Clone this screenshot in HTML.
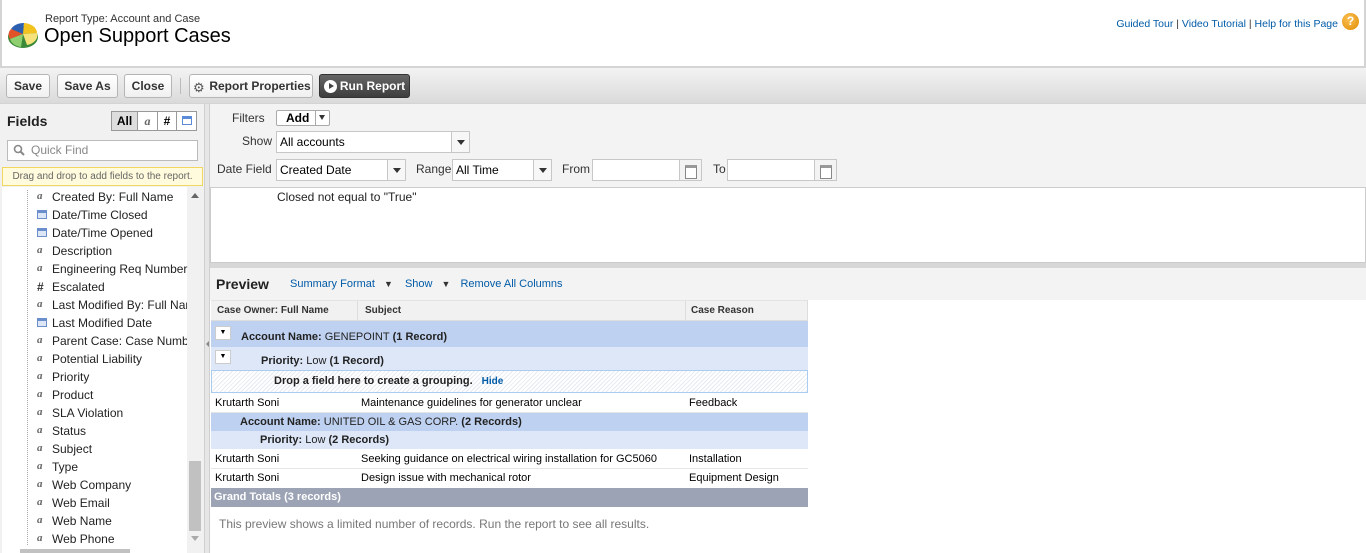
<!DOCTYPE html>
<html><head><style>
*{box-sizing:border-box;margin:0;padding:0}
body{width:1366px;height:553px;overflow:hidden;background:#d4d4d4;font-family:"Liberation Sans",Arial,sans-serif;font-size:12px;color:#000;position:relative}
.a{position:absolute}
.btn{position:absolute;top:74px;height:24px;border:1px solid #b5b5b5;border-radius:3px;background:linear-gradient(#fff,#f0f0f0);font-weight:bold;font-size:12px;color:#333;text-align:center;line-height:22px}
.inp{position:absolute;height:22px;border:1px solid #c7c7c7;background:#fff;font-size:12px;line-height:20px;padding-left:3px}
.dd{position:absolute;right:0;top:0;width:18px;height:20px;border-left:1px solid #c7c7c7;background:#f7f7f7}
.dd:after{content:"";position:absolute;left:5px;top:8px;border-left:4px solid transparent;border-right:4px solid transparent;border-top:5px solid #333}
.lbl{position:absolute;color:#333;font-size:12px}
.field{position:absolute;left:52px;font-size:12px;color:#222;height:18px;line-height:18px;white-space:nowrap}
.ic{position:absolute;left:37px;width:10px;font-size:11px;color:#666;font-style:italic;font-family:"Liberation Serif",serif;font-weight:bold}
.row{position:absolute;left:211px;width:597px;font-size:11px}
.cal{position:absolute;right:0;top:0;width:22px;height:20px;border-left:1px solid #c7c7c7;background:#f3f3f3}
.cal:after{content:"";position:absolute;left:5px;top:5px;width:10px;height:10px;border:1px solid #888;border-top:3px solid #999;background:#fff}
</style></head><body>
<div class="a" style="left:2px;top:0;width:1362px;height:66px;background:#fff"></div>
<svg class="a" style="left:7px;top:17px" width="32" height="34" viewBox="0 0 32 34">
<ellipse cx="16" cy="20" rx="15" ry="11" fill="#3a8a3a"/>
<path d="M16 17 L4 12 A14 10 0 0 1 17 6 Z" fill="#2d5fb0"/>
<path d="M16 17 L17 6 A14 10 0 0 1 30 16 Z" fill="#f2c21e"/>
<path d="M16 17 L30 16 A14 10 0 0 1 20 28 Z" fill="#f6e27a"/>
<path d="M16 17 L4 12 A14 10 0 0 0 3 22 Z" fill="#e2532a"/>
<path d="M16 17 L3 22 A14 10 0 0 0 14 30 Z" fill="#8fcf6f"/>
</svg>
<div class="a" style="left:45px;top:13px;font-size:11px;color:#333">Report Type: Account and Case</div>
<div class="a" style="left:44px;top:25px;font-size:20px;color:#000">Open Support Cases</div>
<div class="a" style="right:28px;top:18px;font-size:10.5px;color:#015ba7;white-space:nowrap">Guided Tour <span style="color:#333">|</span> Video Tutorial <span style="color:#333">|</span> Help for this Page</div>
<div class="a" style="left:1342px;top:13px;width:17px;height:17px;border-radius:50%;background:radial-gradient(circle at 40% 35%,#fbc155,#e08a00);color:#fff;font-weight:bold;font-size:12px;text-align:center;line-height:17px">?</div>
<div class="a" style="left:0;top:68px;width:1366px;height:35px;background:linear-gradient(#f3f3f3,#dadada)"></div>
<div class="btn" style="left:6px;width:44px">Save</div>
<div class="btn" style="left:57px;width:61px">Save As</div>
<div class="btn" style="left:124px;width:48px">Close</div>
<div class="a" style="left:180px;top:78px;width:1px;height:16px;background:#bbb"></div>
<div class="btn" style="left:189px;width:124px;padding-left:18px">Report Properties</div>
<div class="a" style="left:193px;top:80px;font-size:13px;color:#555">⚙</div>
<div class="btn" style="left:319px;width:91px;background:linear-gradient(#666,#3d3d3d);border-color:#333;color:#fff;padding-left:16px">Run Report</div>
<div class="a" style="left:324px;top:80px;width:13px;height:13px;border-radius:50%;background:#fff"></div>
<div class="a" style="left:329px;top:83px;border-top:3.5px solid transparent;border-bottom:3.5px solid transparent;border-left:5px solid #444"></div>
<div class="a" style="left:0;top:104px;width:204px;height:449px;background:#f1f1f1"></div>
<div class="a" style="left:7px;top:113px;font-size:14px;font-weight:bold;color:#222">Fields</div>
<div class="a" style="left:111px;top:111px;width:86px;height:20px;border:1px solid #999;background:#fff;display:flex">
<div style="width:26px;background:#ddd;font-weight:bold;text-align:center;line-height:18px;border-right:1px solid #999">All</div>
<div style="width:20px;text-align:center;line-height:18px;border-right:1px solid #999;font-style:italic;color:#666;font-family:'Liberation Serif',serif;font-weight:bold">a</div>
<div style="width:19px;text-align:center;line-height:18px;border-right:1px solid #999;font-weight:bold">#</div>
<div style="flex:1;position:relative"><div style="position:absolute;left:5px;top:4px;width:10px;height:9px;border:1px solid #5b8ad6;border-top:3px solid #5b8ad6"></div></div>
</div>
<div class="a" style="left:7px;top:140px;width:191px;height:21px;border:1px solid #bbb;background:#fff;color:#888;font-size:12px;line-height:19px;padding-left:23px">Quick Find</div>
<svg class="a" style="left:13px;top:144px" width="12" height="12"><circle cx="5" cy="5" r="3.5" stroke="#888" stroke-width="1.6" fill="none"/><line x1="7.5" y1="7.5" x2="11" y2="11" stroke="#888" stroke-width="2"/></svg>
<div class="a" style="left:2px;top:167px;width:201px;height:19px;background:#fffbdc;border:1px solid #f0d860;color:#666;font-size:10px;line-height:17px;text-align:center">Drag and drop to add fields to the report.</div>
<div class="a" style="left:2px;top:187px;width:185px;height:366px;background:#fff"></div>
<div class="a" style="left:27px;top:190px;height:355px;border-left:1px dotted #aaa"></div>
<div class="a" style="left:187px;top:187px;width:15px;height:366px;background:#f1f1f1"></div>
<div class="a" style="left:189px;top:461px;width:12px;height:70px;background:#c1c1c1"></div>
<div class="a" style="left:191px;top:193px;border-left:4px solid transparent;border-right:4px solid transparent;border-bottom:5px solid #666"></div>
<div class="a" style="left:191px;top:536px;border-left:4px solid transparent;border-right:4px solid transparent;border-top:5px solid #aaa"></div>
<div class="a" style="left:20px;top:549px;width:110px;height:4px;background:#c1c1c1"></div>
<div class="field" style="top:188px">Created By: Full Name</div>
<div class="field" style="top:206px">Date/Time Closed</div>
<div class="field" style="top:224px">Date/Time Opened</div>
<div class="field" style="top:242px">Description</div>
<div class="field" style="top:260px">Engineering Req Number</div>
<div class="field" style="top:278px">Escalated</div>
<div class="field" style="top:296px;width:135px;overflow:hidden">Last Modified By: Full Name</div>
<div class="field" style="top:314px">Last Modified Date</div>
<div class="field" style="top:332px;width:135px;overflow:hidden">Parent Case: Case Number</div>
<div class="field" style="top:350px">Potential Liability</div>
<div class="field" style="top:368px">Priority</div>
<div class="field" style="top:386px">Product</div>
<div class="field" style="top:404px">SLA Violation</div>
<div class="field" style="top:422px">Status</div>
<div class="field" style="top:440px">Subject</div>
<div class="field" style="top:458px">Type</div>
<div class="field" style="top:476px">Web Company</div>
<div class="field" style="top:494px">Web Email</div>
<div class="field" style="top:512px">Web Name</div>
<div class="field" style="top:530px">Web Phone</div>
<div class="ic" style="top:190px">a</div>
<div class="a" style="left:37px;top:210px;width:10px;height:9px;border:1px solid #6b8fcc;border-top:3px solid #6b8fcc;background:#dde6f5"></div>
<div class="a" style="left:37px;top:228px;width:10px;height:9px;border:1px solid #6b8fcc;border-top:3px solid #6b8fcc;background:#dde6f5"></div>
<div class="ic" style="top:244px">a</div>
<div class="ic" style="top:262px">a</div>
<div class="a" style="left:37px;top:280px;font-size:12px;font-weight:bold;color:#333">#</div>
<div class="ic" style="top:298px">a</div>
<div class="a" style="left:37px;top:318px;width:10px;height:9px;border:1px solid #6b8fcc;border-top:3px solid #6b8fcc;background:#dde6f5"></div>
<div class="ic" style="top:334px">a</div><div class="ic" style="top:352px">a</div><div class="ic" style="top:370px">a</div><div class="ic" style="top:388px">a</div><div class="ic" style="top:406px">a</div><div class="ic" style="top:424px">a</div><div class="ic" style="top:442px">a</div><div class="ic" style="top:460px">a</div><div class="ic" style="top:478px">a</div><div class="ic" style="top:496px">a</div><div class="ic" style="top:514px">a</div><div class="ic" style="top:532px">a</div>
<div class="a" style="left:210px;top:104px;width:1156px;height:84px;background:#f3f3f3"></div>
<div class="lbl" style="left:232px;top:111px;font-size:12px">Filters</div>
<div class="a" style="left:276px;top:110px;width:54px;height:16px;border:1px solid #aaa;border-radius:2px;background:#fff;font-weight:bold;font-size:12px;line-height:14px;padding-left:9px">Add<span style="position:absolute;left:38px;top:0;height:14px;border-left:1px solid #aaa;width:15px"></span><span style="position:absolute;left:42px;top:4px;border-left:3.5px solid transparent;border-right:3.5px solid transparent;border-top:5px solid #333"></span></div>
<div class="lbl" style="left:242px;top:134px">Show</div>
<div class="inp" style="left:276px;top:131px;width:194px">All accounts<div class="dd"></div></div>
<div class="lbl" style="left:217px;top:162px">Date Field</div>
<div class="inp" style="left:276px;top:159px;width:130px">Created Date<div class="dd"></div></div>
<div class="lbl" style="left:416px;top:162px">Range</div>
<div class="inp" style="left:452px;top:159px;width:100px">All Time<div class="dd"></div></div>
<div class="lbl" style="left:562px;top:162px">From</div>
<div class="inp" style="left:592px;top:159px;width:110px"><div class="cal"></div></div>
<div class="lbl" style="left:713px;top:162px">To</div>
<div class="inp" style="left:727px;top:159px;width:110px"><div class="cal"></div></div>
<div class="a" style="left:210px;top:187px;width:1156px;height:76px;background:#fff;border:1px solid #ccc"></div>
<div class="a" style="left:277px;top:190px;font-size:12px;color:#222">Closed not equal to "True"</div>
<div class="a" style="left:210px;top:263px;width:1156px;height:5px;background:#d7d7d7"></div>
<div class="a" style="left:210px;top:268px;width:1156px;height:285px;background:#fff"></div>
<div class="a" style="left:210px;top:268px;width:1156px;height:32px;background:#f3f3f3"></div>
<div class="a" style="left:216px;top:276px;font-size:14px;font-weight:bold;color:#222">Preview</div>
<div class="a" style="left:290px;top:278px;font-size:11px;color:#015ba7">Summary Format <span style="color:#333;font-size:9px;margin-left:6px">▼</span><span style="margin-left:12px">Show</span> <span style="color:#333;font-size:9px;margin-left:6px">▼</span><span style="margin-left:10px">Remove All Columns</span></div>
<div class="row" style="top:300px;height:21px;background:#f1f1f1;border-bottom:1px solid #ddd;border-top:1px solid #e3e3e3;font-weight:bold;color:#333;line-height:19px;font-size:10px">
<span class="a" style="left:6px">Case Owner: Full Name</span><span class="a" style="left:146px;top:0;height:19px;border-left:1px solid #ddd;padding-left:7px">Subject</span><span class="a" style="left:474px;top:0;height:19px;border-left:1px solid #ddd;padding-left:5px">Case Reason</span></div>
<div class="a" style="left:807px;top:300px;width:1px;height:21px;background:#ddd"></div>
<div class="row" style="top:321px;height:26px;background:#bfd1f0;line-height:32px;font-weight:bold;color:#222"><span style="padding-left:30px">Account Name: <span style="font-weight:normal">GENEPOINT</span> (1 Record)</span></div>
<div class="a" style="left:215px;top:326px;width:16px;height:14px;background:#fff;border:1px solid #ccc;font-size:7px;text-align:center;line-height:12px">▼</div>
<div class="row" style="top:347px;height:23px;background:#dde7f8;line-height:28px;font-weight:bold;color:#222"><span style="padding-left:50px">Priority: <span style="font-weight:normal">Low</span> (1 Record)</span></div>
<div class="a" style="left:215px;top:350px;width:16px;height:14px;background:#fff;border:1px solid #ccc;font-size:7px;text-align:center;line-height:12px">▼</div>
<div class="row" style="top:370px;height:23px;border:1px solid #a9cdf0;background:repeating-linear-gradient(135deg,#fff 0 2px,#e6ebf2 2px 3px);line-height:21px;font-weight:bold;color:#222"><span style="padding-left:62px">Drop a field here to create a grouping.</span><span style="color:#015ba7;font-size:10px;margin-left:9px">Hide</span></div>
<div class="row" style="top:393px;height:20px;border-bottom:1px solid #e5e5e5;line-height:20px"><span class="a" style="left:4px">Krutarth Soni</span><span class="a" style="left:150px">Maintenance guidelines for generator unclear</span><span class="a" style="left:478px">Feedback</span></div>
<div class="row" style="top:413px;height:18px;background:#bfd1f0;line-height:18px;font-weight:bold;color:#222"><span style="padding-left:29px">Account Name: <span style="font-weight:normal">UNITED OIL &amp; GAS CORP.</span> (2 Records)</span></div>
<div class="row" style="top:431px;height:18px;background:#dde7f8;line-height:18px;font-weight:bold;color:#222"><span style="padding-left:49px">Priority: <span style="font-weight:normal">Low</span> (2 Records)</span></div>
<div class="row" style="top:449px;height:20px;border-bottom:1px solid #e5e5e5;line-height:20px"><span class="a" style="left:4px">Krutarth Soni</span><span class="a" style="left:150px">Seeking guidance on electrical wiring installation for GC5060</span><span class="a" style="left:478px">Installation</span></div>
<div class="row" style="top:469px;height:19px;line-height:19px"><span class="a" style="left:4px">Krutarth Soni</span><span class="a" style="left:150px">Design issue with mechanical rotor</span><span class="a" style="left:478px">Equipment Design</span></div>
<div class="row" style="top:488px;height:19px;background:#9ba3b5;color:#fff;font-weight:bold;line-height:19px"><span style="padding-left:3px">Grand Totals (3 records)</span></div>
<div class="a" style="left:219px;top:517px;font-size:12px;color:#777">This preview shows a limited number of records. Run the report to see all results.</div>
<div class="a" style="left:204px;top:104px;width:6px;height:449px;background:#e6e6e6;border-left:1px solid #cfcfcf;border-right:1px solid #cfcfcf"></div>
<div class="a" style="left:206px;top:341px;border-top:3px solid transparent;border-bottom:3px solid transparent;border-right:3px solid #888"></div>
</body></html>
